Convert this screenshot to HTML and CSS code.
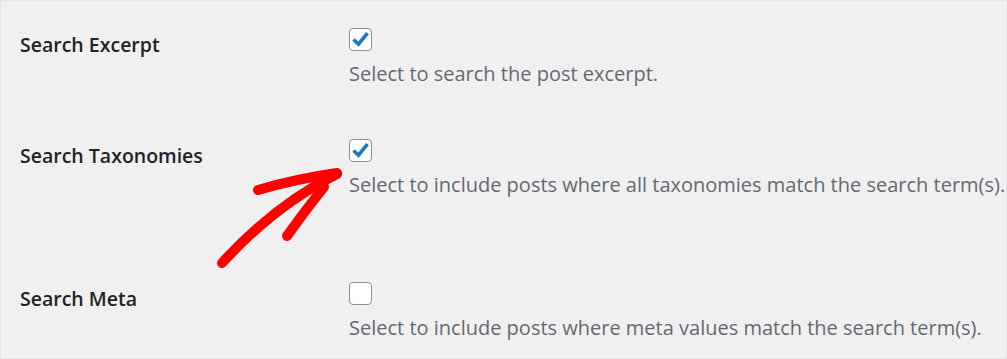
FILE: index.html
```html
<!DOCTYPE html>
<html>
<head>
<meta charset="utf-8">
<link rel="stylesheet" href="styles.css">
</head>
<body>
<div class="page">
  <div class="row row-excerpt">
    <div class="label">Search Excerpt</div>
    <div class="field">
      <span class="checkbox checked"><svg viewBox="0 0 23 23"><path d="M4.5 11.5 L9.5 16.2 L18.5 5.2"/></svg></span>
      <p class="desc">Select to search the post excerpt.</p>
    </div>
  </div>
  <div class="row row-tax">
    <div class="label">Search Taxonomies</div>
    <div class="field">
      <span class="checkbox checked"><svg viewBox="0 0 23 23"><path d="M4.5 11.5 L9.5 16.2 L18.5 5.2"/></svg></span>
      <p class="desc">Select to include posts where all taxonomies match the search term(s). This</p>
    </div>
  </div>
  <div class="row row-meta">
    <div class="label">Search Meta</div>
    <div class="field">
      <span class="checkbox"></span>
      <p class="desc">Select to include posts where meta values match the search term(s).</p>
    </div>
  </div>
  <svg class="arrow" viewBox="0 0 1007 359" width="1007" height="359">
    <path d="M222 263 Q275 205 337 174" />
    <path d="M258 190 Q295 179 337 173" />
    <path d="M287 236 Q304 212 324 187" />
  </svg>
</div>
</body>
</html>
```
FILE: styles.css
```css
* { box-sizing: border-box; }
html, body {
  margin: 0;
  padding: 0;
  background: #f0f0f1;
}
body {
  width: 1007px;
  height: 359px;
  overflow: hidden;
}
.page {
  position: relative;
  width: 1007px;
  height: 359px;
  border: 1px solid #e4e4e4;
  font-family: "Open Sans", "Noto Sans", sans-serif;
  overflow: hidden;
}
.row {
  display: grid;
  grid-template-columns: 329px 1fr;
  padding-left: 19px;
}
.row-excerpt { padding-top: 27px; }
.row-tax { padding-top: 52px; }
.row-meta { padding-top: 84px; }
.label {
  font-size: 19.5px;
  font-weight: 600;
  color: #1d2327;
  line-height: 26px;
  padding-top: 4px;
  white-space: nowrap;
}
.field {
  display: flex;
  flex-direction: column;
  align-items: flex-start;
  min-width: 0;
}
.checkbox {
  display: block;
  width: 23px;
  height: 23px;
  background: #fff;
  border: 1px solid #8c8f94;
  border-radius: 4px;
  position: relative;
}
.checkbox svg {
  position: absolute;
  left: -1px;
  top: -1px;
  width: 23px;
  height: 23px;
  fill: none;
  stroke: #1878c8;
  stroke-width: 3.6;
  stroke-linecap: butt;
  stroke-linejoin: miter;
}
.desc {
  margin: 10px 0 0;
  font-size: 20px;
  line-height: 26px;
  color: #646970;
  white-space: nowrap;
}
.arrow {
  position: absolute;
  left: -1px;
  top: -1px;
  fill: none;
  stroke: #ff0000;
  stroke-width: 10;
  stroke-linecap: round;
  stroke-linejoin: round;
}
```
